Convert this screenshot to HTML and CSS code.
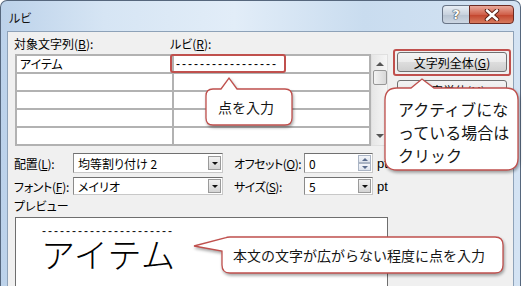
FILE: index.html
```html
<!DOCTYPE html>
<html lang="ja">
<head>
    <meta charset="UTF-8">
    <title>ルビ</title>
    <link rel="stylesheet" href="styles.css">
</head>
<body>
    <div class="window">
        <div class="titlebar">
            <span class="title">ルビ</span>
            <div class="caption-btns">
                <span class="cbtn help">?</span>
                <span class="cbtn close">
                    <svg width="16" height="12" viewBox="0 0 16 12">
                        <path d="M3 1.5 L13 10.5 M13 1.5 L3 10.5" stroke="#5a1f14" stroke-width="4.5" stroke-linecap="round"/>
                        <path d="M3 1.5 L13 10.5 M13 1.5 L3 10.5" stroke="#fff" stroke-width="2.6" stroke-linecap="round"/>
                    </svg>
                </span>
            </div>
        </div>

        <div class="client">
            <div class="top">
                <div class="list">
                    <div class="heads">
                        <span>対象文字列(<u>B</u>):</span>
                        <span>ルビ(<u>R</u>):</span>
                    </div>
                    <div class="list-body">
                        <div class="cells">
                            <div class="cell">アイテム</div>
                            <div class="cell dots">-----------------</div>
                            <div class="cell"></div><div class="cell"></div>
                            <div class="cell"></div><div class="cell"></div>
                            <div class="cell"></div><div class="cell"></div>
                            <div class="cell"></div><div class="cell"></div>
                        </div>
                        <div class="scroll">
                            <span class="arrow up"></span>
                            <span class="thumb"></span>
                            <span class="arrow down"></span>
                        </div>
                    </div>
                </div>
                <div class="side">
                    <button class="btn">文字列全体(<u>G</u>)</button>
                    <button class="btn">文字単位(<u>M</u>)</button>
                </div>
            </div>

            <!-- 配置・フォント -->
            <div class="opt-row">
                <span class="lbl">配置(<u>L</u>):</span>
                <div class="combo wide">均等割り付け 2<span class="drop"></span></div>
                <span class="lbl2">オフセット(<u>O</u>):</span>
                <div class="combo narrow">0<span class="spin"><i></i><i></i></span></div>
                <span class="unit">pt</span>
            </div>
            <div class="opt-row">
                <span class="lbl">フォント(<u>F</u>):</span>
                <div class="combo wide">メイリオ<span class="drop"></span></div>
                <span class="lbl2">サイズ(<u>S</u>):</span>
                <div class="combo narrow">5<span class="drop"></span></div>
                <span class="unit">pt</span>
            </div>

            <div class="preview-label">プレビュー</div>
            <div class="preview">
                <div class="ruby-dots">----------------------</div>
                <div class="base-text">アイテム</div>
            </div>
        </div>
    </div>

    <!-- 吹き出し -->
    <svg class="overlay" width="527" height="286" viewBox="0 0 527 286">
        <rect x="171" y="55" width="114" height="17" rx="2" class="mark"/>
        <rect x="394" y="50" width="116" height="25" rx="2" class="mark"/>
        <g class="balloons">
            <path d="M213,89 L221,89 L229,78 L237,89 L285,89 Q292,89 292,96 L292,118 Q292,125 285,125 L213,125 Q206,125 206,118 L206,96 Q206,89 213,89 Z"/>
            <path d="M397,88 L411,88 L422,79 L434,88 L506,88 Q518,88 518,100 L518,158 Q518,170 506,170 L397,170 Q385,170 385,158 L385,100 Q385,88 397,88 Z"/>
            <path d="M230,237 L495,237 Q503,237 503,245 L503,265 Q503,273 495,273 L230,273 Q222,273 222,265 L222,251 L194,246 L225,238 Q227,237 230,237 Z"/>
        </g>
    </svg>
    <div class="note note-dot">点を入力</div>
    <div class="note note-active">アクティブにな<br>っている場合は<br>クリック</div>
    <div class="note note-preview">本文の文字が広がらない程度に点を入力</div>
</body>
</html>
```

FILE: styles.css
```css
* {
    box-sizing: border-box;
}

body {
    margin: 0;
    width: 527px;
    height: 286px;
    overflow: hidden;
    position: relative;
    background-color: #fff;
    font-family: "Noto Sans CJK JP", sans-serif;
    font-size: 12px;
    color: #000;
}

u {
    text-decoration: underline;
    text-underline-offset: 1px;
}

.window {
    width: 521px;
    height: 300px;
    border: 1px solid #56677d;
    border-bottom: none;
    border-radius: 7px 7px 0 0;
    padding: 0 6px;
    background: linear-gradient(to right, #bcd2ea 0%, #d6e5f4 20%, #e2edf8 45%, #c9dcef 70%, #d4e3f3 100%);
}

.titlebar {
    height: 30px;
    display: flex;
    align-items: flex-start;
}

.title {
    padding: 8px 0 0 2px;
    font-size: 12px;
    color: #111;
    font-feature-settings: "palt";
}

.caption-btns {
    margin-left: auto;
    display: flex;
    margin-top: 4px;
}

.cbtn {
    height: 19px;
    display: flex;
    align-items: center;
    justify-content: center;
    border: 1px solid #6a7688;
}

.help {
    width: 27px;
    border-radius: 4px 0 0 4px;
    border-right: none;
    background: linear-gradient(#e8eef5, #c8d2de 50%, #b7c3d1 51%, #cdd7e3);
    color: #fff;
    font-family: "DejaVu Sans", sans-serif;
    font-weight: bold;
    font-size: 13px;
    text-shadow: 0 0 1px #333, 0 0 1px #333, 0 0 1px #333;
}

.close {
    width: 45px;
    border-radius: 0 4px 4px 0;
    border-color: #6c2a22;
    background: linear-gradient(#e9a89a, #d0604a 50%, #c2432c 51%, #d77a5e);
}

.close svg {
    display: block;
}

.client {
    height: 269px;
    border: 1px solid #8ea2b8;
    background-color: #f0f0f0;
    padding: 3px 6px 0 6px;
    font-feature-settings: "palt";
    white-space: nowrap;
}

.top {
    display: flex;
}

.list {
    width: 374px;
}

.heads {
    display: grid;
    grid-template-columns: 156px 1fr;
    height: 19px;
    line-height: 18px;
}

.list-body {
    display: flex;
    margin-left: 1px;
}

.cells {
    width: 356px;
    display: grid;
    grid-template-columns: 155px 195px;
    grid-auto-rows: 16px;
    gap: 2px;
    padding: 2px;
    background-color: #b2b2b2;
}

.cell {
    background-color: #fff;
    padding-left: 3px;
    line-height: 16px;
    overflow: hidden;
}

.dots {
    font-family: "Liberation Sans", sans-serif;
    letter-spacing: 2px;
    padding-left: 2px;
}

.scroll {
    width: 17px;
    background: linear-gradient(to right, #e6e6e6, #f6f6f6);
    border: 1px solid #e0e0e0;
    display: flex;
    flex-direction: column;
    align-items: center;
}

.scroll .arrow {
    width: 0;
    height: 0;
    border-left: 4px solid transparent;
    border-right: 4px solid transparent;
}

.scroll .up {
    margin-top: 7px;
    border-bottom: 4px solid #555;
}

.scroll .thumb {
    width: 14px;
    height: 15px;
    margin-top: 4px;
    border: 1px solid #979797;
    border-radius: 2px;
    background: linear-gradient(to right, #f3f3f3, #d8d8d8);
}

.scroll .down {
    margin-top: auto;
    margin-bottom: 7px;
    border-top: 4px solid #555;
}

.side {
    margin-left: 9px;
    padding-top: 17px;
    display: flex;
    flex-direction: column;
    gap: 8px;
}

.btn {
    width: 110px;
    height: 20px;
    padding: 0;
    font-family: inherit;
    font-size: 12px;
    font-feature-settings: "palt";
    color: #000;
    border: 1px solid #707070;
    border-radius: 3px;
    background: linear-gradient(#f3f3f3, #ebebeb 50%, #dddddd 51%, #cfcfcf);
}

.opt-row {
    display: flex;
    align-items: center;
    height: 20px;
    margin-top: 7px;
}

.opt-row + .opt-row {
    margin-top: 4px;
    height: 18px;
}

.lbl {
    width: 59px;
    letter-spacing: -0.3px;
}

.lbl2 {
    width: 70px;
    margin-left: 11px;
    letter-spacing: -0.5px;
}

.unit {
    margin-left: 4px;
    font-family: "Liberation Sans", sans-serif;
    font-size: 13px;
}

.combo {
    height: 100%;
    display: flex;
    align-items: center;
    padding-left: 4px;
    background-color: #fff;
    border: 1px solid #8a8a8a;
    border-color: #707070 #c8c8c8 #c8c8c8 #8a8a8a;
    font-size: 12px;
}

.wide {
    width: 150px;
}

.narrow {
    width: 69px;
}

.drop {
    margin-left: auto;
    margin-right: 1px;
    width: 13px;
    height: 14px;
    border: 1px solid #9a9a9a;
    background: linear-gradient(#f2f2f2, #d4d4d4);
    display: flex;
    align-items: center;
    justify-content: center;
}

.drop::after {
    content: "";
    border-left: 3px solid transparent;
    border-right: 3px solid transparent;
    border-top: 3px solid #111;
}

.spin {
    margin-left: auto;
    margin-right: 1px;
    width: 13px;
    height: 16px;
    display: flex;
    flex-direction: column;
}

.spin i {
    flex: 1;
    border: 1px solid #aab4c4;
    background: linear-gradient(#f4f6fa, #dde3ec);
    display: flex;
    align-items: center;
    justify-content: center;
}

.spin i::after {
    content: "";
    border-left: 3px solid transparent;
    border-right: 3px solid transparent;
}

.spin i:first-child::after {
    border-bottom: 3px solid #5a6c8c;
}

.spin i:last-child::after {
    border-top: 3px solid #5a6c8c;
}

.preview-label {
    margin-top: 2px;
    height: 18px;
    line-height: 18px;
}

.preview {
    margin-top: 2px;
    margin-left: 1px;
    width: 373px;
    height: 80px;
    background-color: #fff;
    border: 1px solid #6e6e6e;
    padding: 7px 0 0 26px;
}

.ruby-dots {
    font-family: "Liberation Sans", sans-serif;
    font-size: 12px;
    letter-spacing: 2px;
    line-height: 12px;
    height: 12px;
    color: #111;
}

.base-text {
    font-size: 34px;
    font-weight: 300;
    font-feature-settings: normal;
    letter-spacing: 0.5px;
    line-height: 34px;
    margin-left: -1px;
    color: #000;
}

/* 吹き出し */
.overlay {
    position: absolute;
    left: 0;
    top: 0;
}

.mark {
    fill: none;
    stroke: #c0504d;
    stroke-width: 2;
}

.balloons path {
    fill: #fff;
    stroke: #c0504d;
    stroke-width: 1.3;
    filter: drop-shadow(1px 2px 1.5px rgba(0, 0, 0, 0.35));
}

.note {
    position: absolute;
    color: #161616;
    white-space: nowrap;
}

.note-dot {
    left: 218px;
    top: 97px;
    font-size: 14px;
    line-height: 20px;
}

.note-active {
    left: 398px;
    top: 98px;
    font-size: 16px;
    line-height: 23px;
}

.note-preview {
    left: 233px;
    top: 245px;
    font-size: 14px;
    line-height: 20px;
}
```
